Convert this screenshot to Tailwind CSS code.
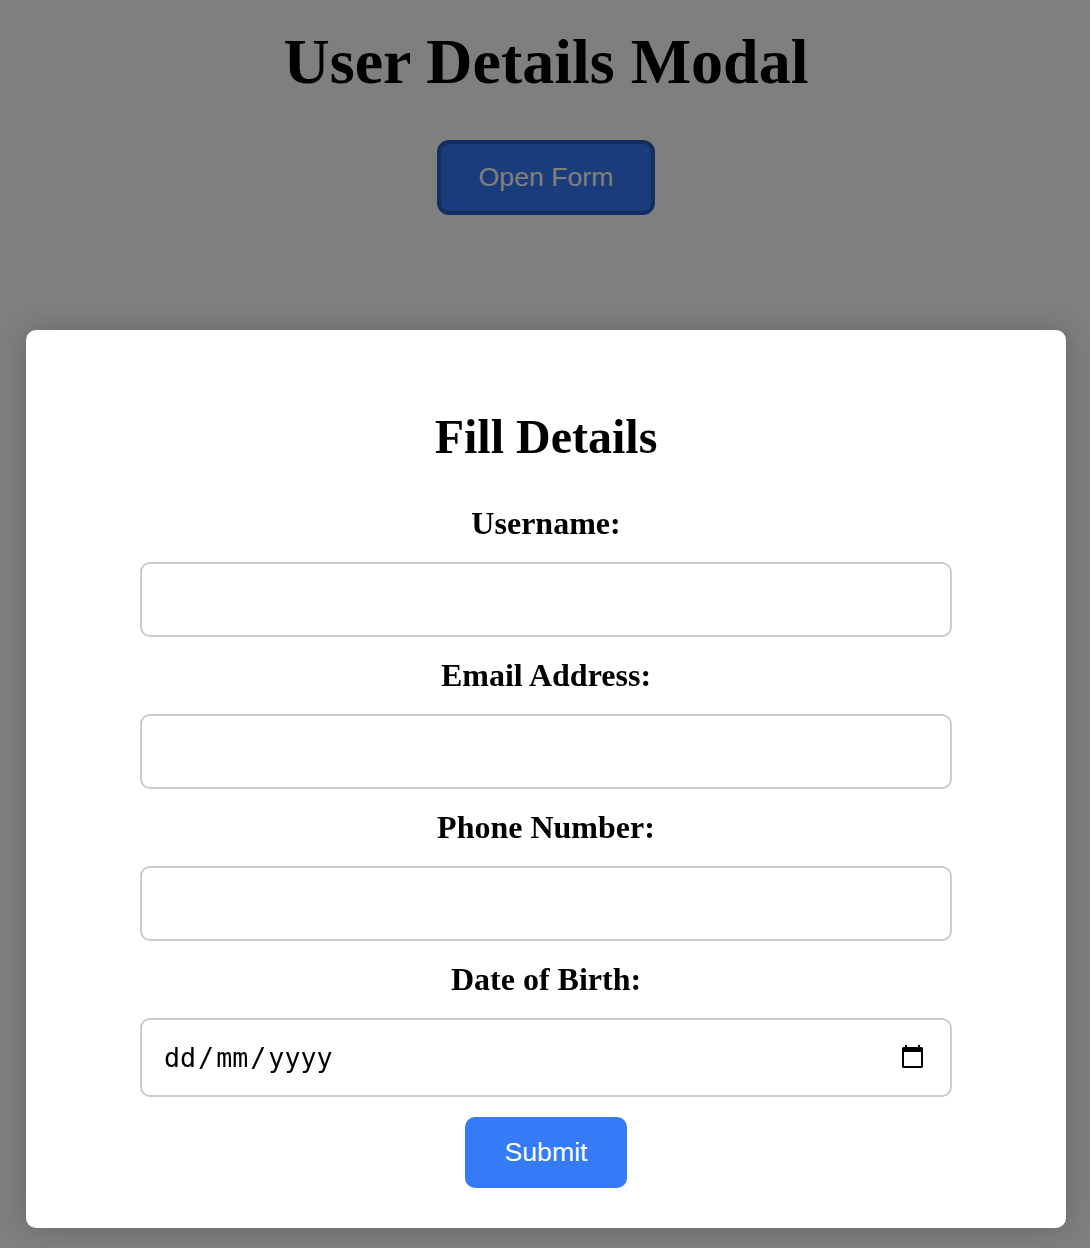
<!DOCTYPE html>
<html lang="en">
<head>
<meta charset="utf-8">
<title>User Details Modal</title>
<script src="https://cdn.jsdelivr.net/npm/@tailwindcss/browser@4"></script>
</head>
<body class="h-[1248px] overflow-hidden bg-white text-center font-['Liberation_Serif',serif] text-black">
<main class="flex flex-col items-center pt-[25px] pl-[2px]">
  <h1 class="text-[64px] leading-[74px] font-bold">User Details Modal</h1>
  <button class="mt-[41px] h-[75px] w-[218px] rounded-[12px] border-4 border-[#265cc0] bg-[#3678f6] pb-[2px] font-['Liberation_Sans',sans-serif] text-[26.67px] leading-[30px] text-white">Open Form</button>
</main>
<div class="fixed inset-0 bg-black/50 pt-[330px] pl-[26px]">
  <form class="flex h-[898px] w-[1040px] flex-col items-center rounded-[10px] bg-white pt-[80px] shadow-[0_0_32px_rgba(0,0,0,0.2)]">
    <h2 class="text-[48px] leading-[54px] font-bold">Fill Details</h2>
    <label for="username" class="mt-[40px] text-[32px] leading-[38px] font-bold">Username:</label>
    <input id="username" type="text" class="mt-[20px] h-[75px] w-[812px] shrink-0 rounded-[10px] border-2 border-[#ccc] px-5">
    <label for="email" class="mt-[19px] text-[32px] leading-[38px] font-bold">Email Address:</label>
    <input id="email" type="email" class="mt-[20px] h-[75px] w-[812px] shrink-0 rounded-[10px] border-2 border-[#ccc] px-5">
    <label for="phone" class="mt-[19px] text-[32px] leading-[38px] font-bold">Phone Number:</label>
    <input id="phone" type="tel" class="mt-[20px] h-[75px] w-[812px] shrink-0 rounded-[10px] border-2 border-[#ccc] px-5">
    <span class="mt-[19px] text-[32px] leading-[38px] font-bold">Date of Birth:</span>
    <div class="mt-[20px] flex h-[79px] w-[812px] shrink-0 items-center justify-between rounded-[10px] border-2 border-[#ccc] pr-[25px] pl-5 font-['DejaVu_Sans_Mono',monospace] text-[26.67px] leading-[32px]">
      <div class="flex"><span class="px-[2px]">dd</span><span>/</span><span class="px-[2px]">mm</span><span>/</span><span class="px-[2px]">yyyy</span></div>
      <svg class="mb-[3px] h-6 w-[24px]" viewBox="0 0 24 24" fill="none"><path fill="#000" fill-rule="evenodd" d="M4 1h2v2h11V1h2v2h1.500a1.500 1.500 0 0 1 1.500 1.500v18a1.500 1.500 0 0 1-1.500 1.500h-18A1.500 1.500 0 0 1 1 22.500v-18A1.500 1.500 0 0 1 2.500 3H4zM3 8v14h17V8z"/></svg>
    </div>
    <button type="button" class="mt-[20px] h-[71px] w-[162px] shrink-0 rounded-[10px] bg-[#357af6] pb-[2px] font-['Liberation_Sans',sans-serif] text-[26.67px] leading-[30px] text-white">Submit</button>
  </form>
</div>
</body>
</html>
